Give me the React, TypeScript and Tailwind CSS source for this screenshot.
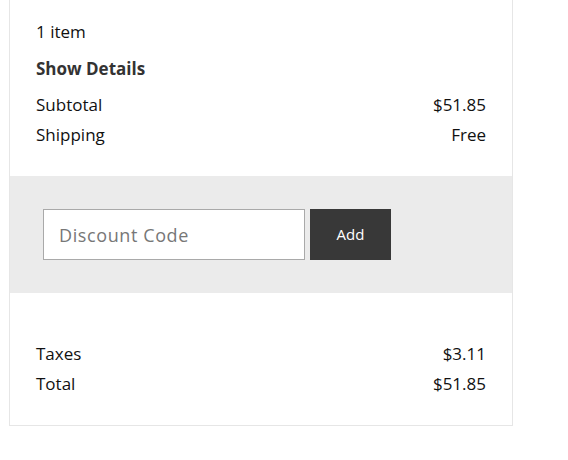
export default function App() {
  return (
    <div className="min-h-[460px] bg-white font-['Open_Sans',sans-serif] text-[17px] text-[#111]">
      <div className="ml-[9px] w-[504px] border-x border-b border-[#e6e6e6]">
        <div className="px-[26px] pt-[17px] pb-[26px]">
          <div className="leading-[30px]">1 item</div>
          <div className="mt-[7px] leading-[30px] font-bold text-[#333]">Show Details</div>
          <div className="mt-[6px] flex justify-between leading-[30px]">
            <span>Subtotal</span>
            <span>$51.85</span>
          </div>
          <div className="flex justify-between leading-[30px]">
            <span>Shipping</span>
            <span>Free</span>
          </div>
        </div>

        <div className="flex h-[117px] items-center gap-[5px] bg-[#ebebeb] px-[33px]">
          <input
            type="text"
            placeholder="Discount Code"
            className="h-[51px] w-[262px] border border-[#a9a9a9] bg-white px-[15px] text-[18px] tracking-[0.6px] text-[#333] outline-none placeholder:text-[#777]"
          />
          <button className="h-[51px] w-[81px] bg-[#383838] text-[15px] text-white">Add</button>
        </div>

        <div className="px-[26px] pt-[46px] pb-[26px]">
          <div className="flex justify-between leading-[30px]">
            <span>Taxes</span>
            <span>$3.11</span>
          </div>
          <div className="flex justify-between leading-[30px]">
            <span>Total</span>
            <span>$51.85</span>
          </div>
        </div>
      </div>
    </div>
  );
}
